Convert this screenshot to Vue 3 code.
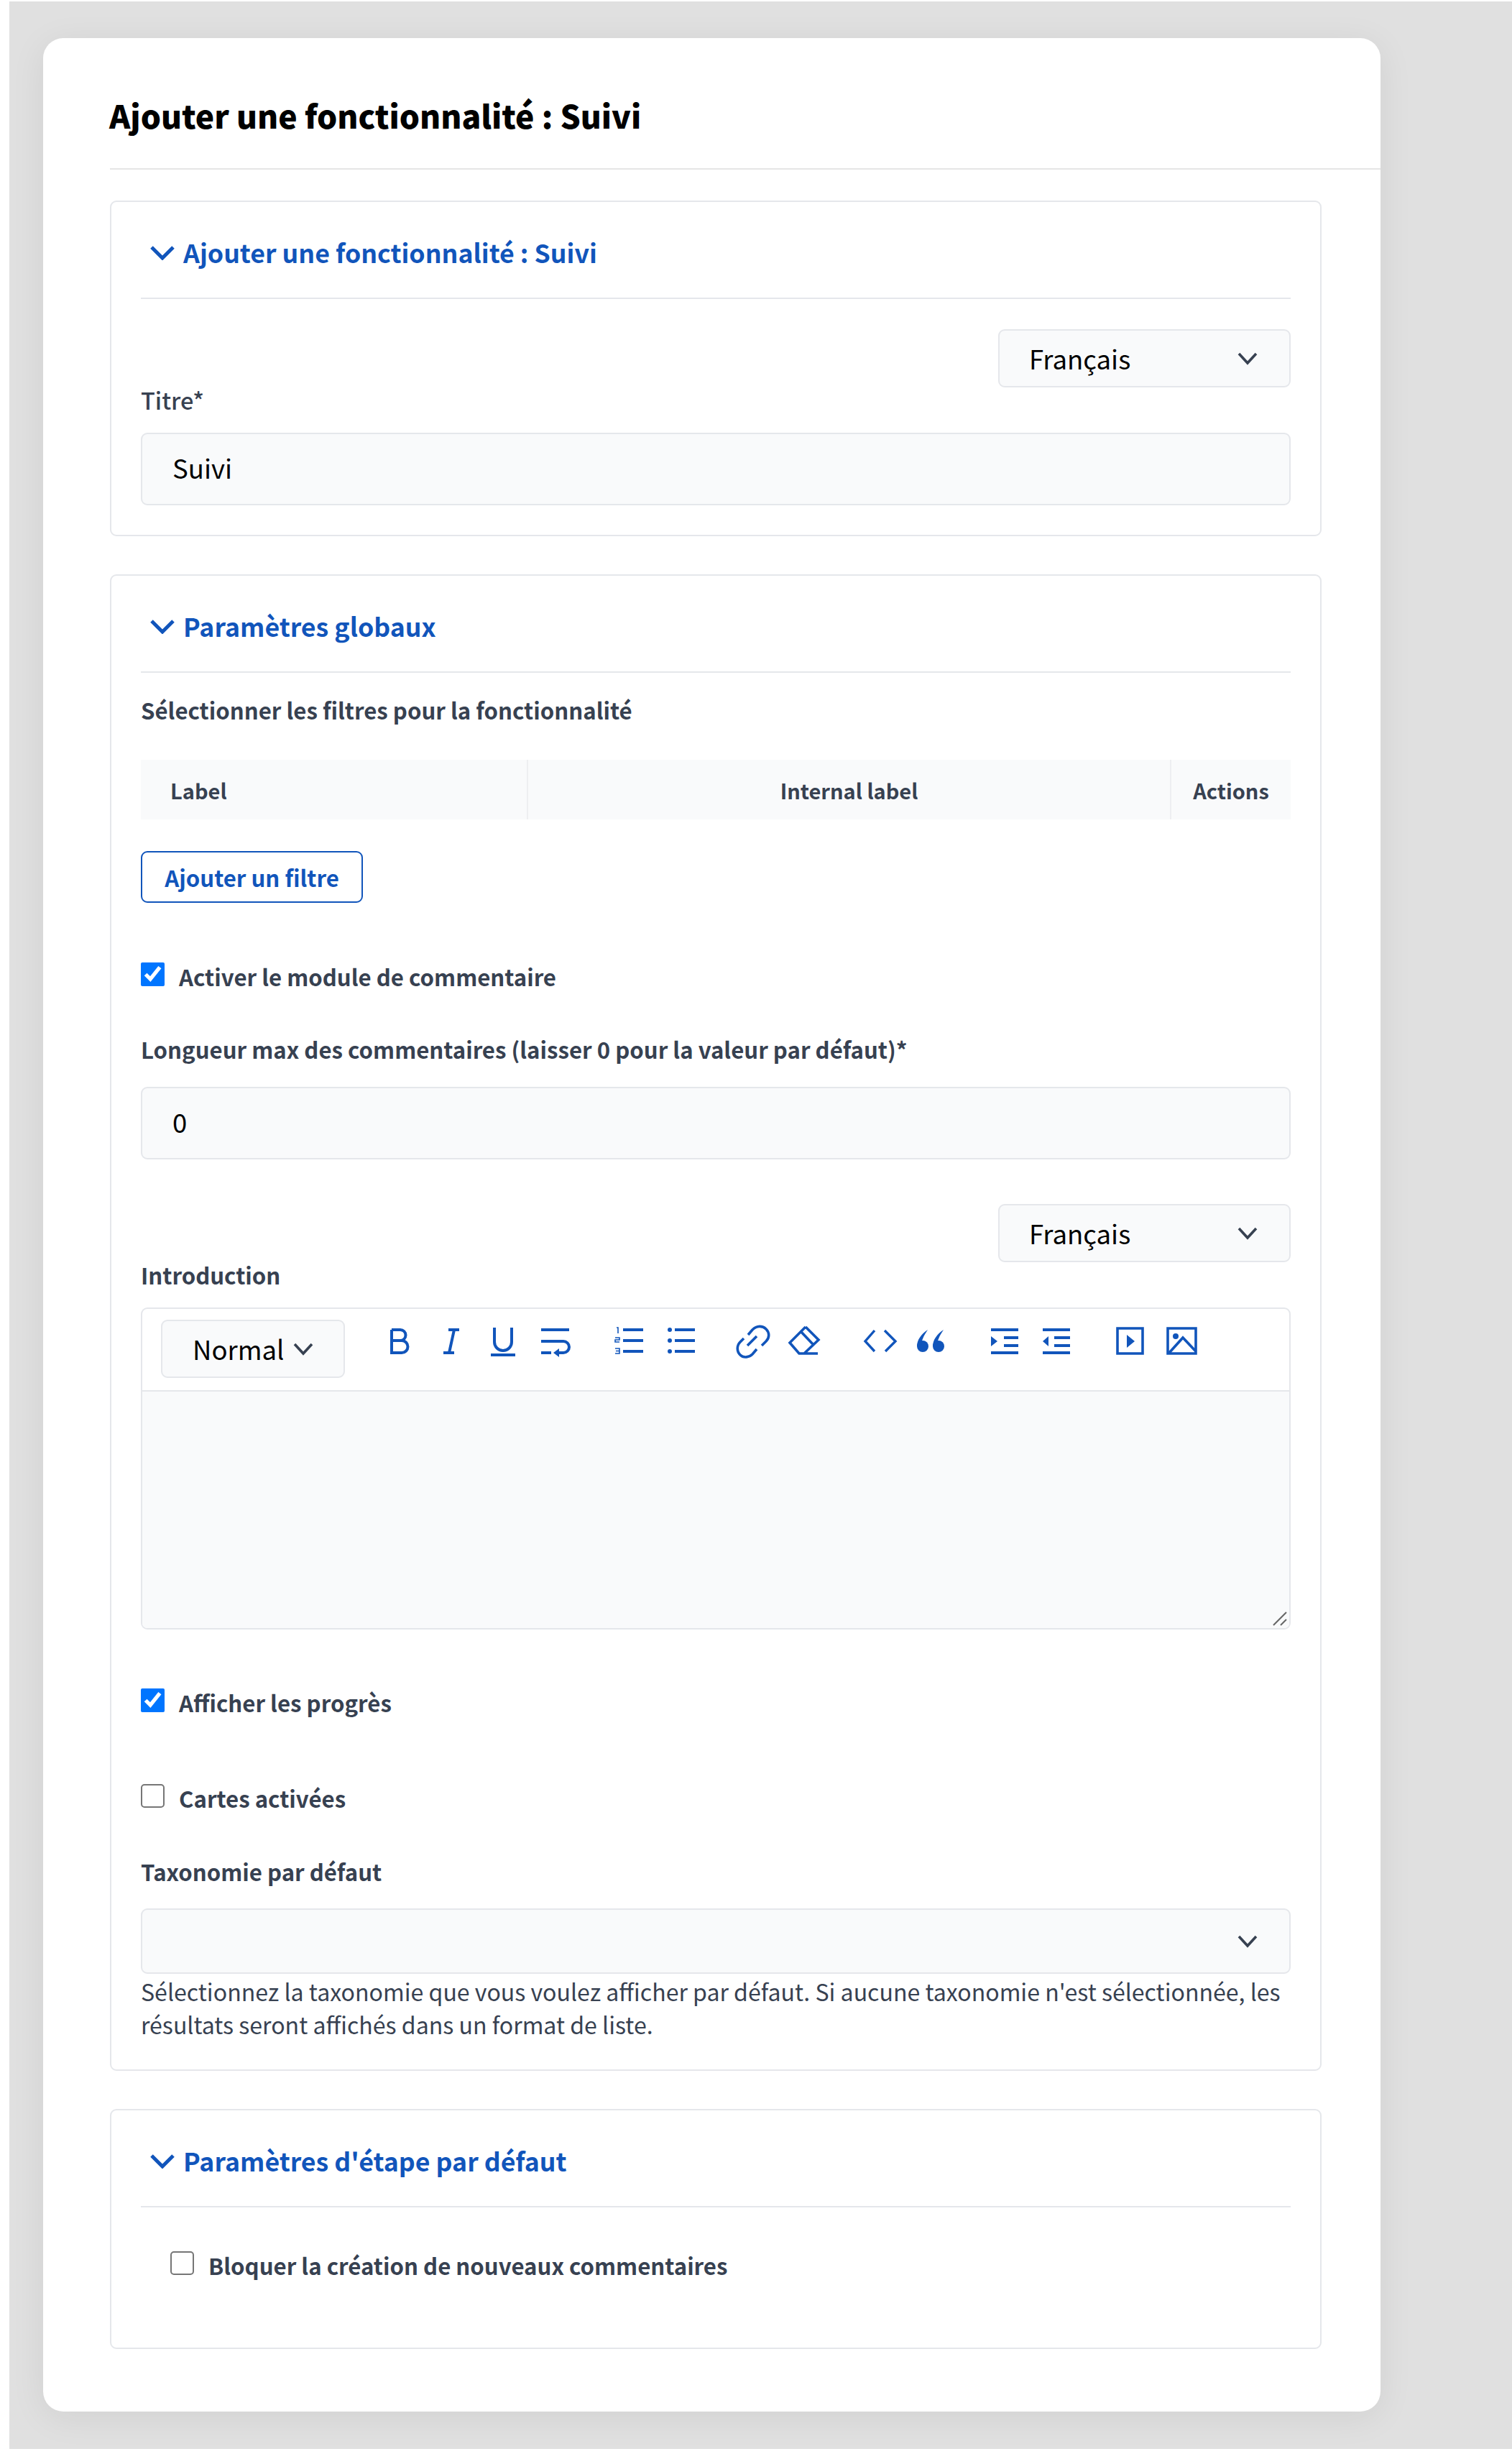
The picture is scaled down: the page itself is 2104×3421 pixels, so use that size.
<script setup>
import { ref } from 'vue'

const title = 'Ajouter une fonctionnalité : Suivi'
const showComments = ref(true)
const showProgress = ref(true)
const mapsEnabled = ref(false)
const blockComments = ref(false)

// 44x44 boxes, stroke and colour come from the svg element
const toolbarGroups = [
  [
    '<path d="M11 6v32h14a8 8 0 0 0 0-17H11M11 6h12a7.5 7.5 0 0 1 0 15"/>',
    '<path d="M18 6h15M11 38h15M26 6l-7 32"/>',
    '<path d="M10 3v20a12 12 0 0 0 24 0V3M5 41h34" />',
    '<path d="M3 6h39M3 22h31a8 8 0 0 1 0 16h-8M3 38h14"/><path d="M20 38l8-6v12z" fill="currentColor" stroke="none"/>'
  ],
  [
    '<path d="M13 6h28M13 21h28M13 36h28"/><path d="M4 3h2v8M2 17h6v3H2v3h6M2 32h6v7H2M3 35.5h5" stroke-width="1.6"/>',
    '<path d="M13 6h28M13 21h28M13 36h28"/><circle cx="6" cy="6" r="3" fill="currentColor" stroke="none"/><circle cx="6" cy="21" r="3" fill="currentColor" stroke="none"/><circle cx="6" cy="36" r="3" fill="currentColor" stroke="none"/>'
  ],
  [
    '<path d="M13 13l6-7c6-6 14-6 19-1s5 12 0 17l-6 6M7 18l-5 5c-5 5-5 13 0 18s13 3 17-1l6-7M12 28l13-13" stroke-width="3.6"/>',
    '<path d="M21 2l18 18-20 19M21 2L-1 24l13 15h26M14 8l18 19" stroke-width="3.6"/>'
  ],
  [
    '<path d="M15 7L2 22l13 14M29 7l15 15-14 14" stroke-width="3.4"/>',
    '<circle cx="10" cy="29" r="8" fill="currentColor" stroke="none"/><circle cx="32" cy="29" r="8" fill="currentColor" stroke="none"/><path d="M17 6C8 12 2 20 2 29h6c0-8 3-14 9-23zM39 6C30 12 24 20 24 29h6c0-8 3-14 9-23z" fill="currentColor" stroke="none"/>'
  ],
  [
    '<path d="M3 6h38M21 17h20M21 28h20M3 38h38"/><path d="M3 15l9 7-9 7z" fill="currentColor" stroke="none"/>',
    '<path d="M3 6h38M19 17h22M19 28h22M3 38h38"/><path d="M11 15l-8 7 8 7z" fill="currentColor" stroke="none"/>'
  ],
  [
    '<path d="M5 4h35v35H5z" stroke-width="3.6"/><path d="M18 13l11 9-11 9z" fill="currentColor" stroke="none"/>',
    '<path d="M3 4h39v35H3z" stroke-width="3.6"/><circle cx="14" cy="15" r="4" fill="currentColor" stroke="none"/><path d="M5 38l19-21 18 19" stroke-width="3.6"/>'
  ]
]
</script>

<template>
  <div class="page">
    <div class="card">
      <header class="card-head">
        <h1>{{ title }}</h1>
      </header>

      <div class="card-body">
        <section class="panel">
          <div class="panel-head">
            <svg class="panel-chevron" viewBox="0 0 34 20"><path d="M2 2l15 15L32 2" /></svg>
            <h2>{{ title }}</h2>
          </div>
          <div class="lang-row first">
            <div class="select lang">
              <span>Français</span>
              <svg class="select-chevron" viewBox="0 0 28 18"><path d="M2 2l12 13L26 2" /></svg>
            </div>
          </div>
          <label class="label titre">Titre*</label>
          <input class="field" value="Suivi" />
        </section>

        <section class="panel panel-global">
          <div class="panel-head">
            <svg class="panel-chevron" viewBox="0 0 34 20"><path d="M2 2l15 15L32 2" /></svg>
            <h2>Paramètres globaux</h2>
          </div>
          <label class="label filters">Sélectionner les filtres pour la fonctionnalité</label>
          <div class="filter-table">
            <div class="col col-label">Label</div>
            <div class="col col-internal">Internal label</div>
            <div class="col col-actions">Actions</div>
          </div>
          <button class="add-btn">Ajouter un filtre</button>

          <label class="check comments">
            <input type="checkbox" v-model="showComments" />
            <span>Activer le module de commentaire</span>
          </label>

          <label class="label max-length">Longueur max des commentaires (laisser 0 pour la valeur par défaut)*</label>
          <input class="field" value="0" />

          <div class="lang-row second">
            <div class="select lang">
              <span>Français</span>
              <svg class="select-chevron" viewBox="0 0 28 18"><path d="M2 2l12 13L26 2" /></svg>
            </div>
          </div>
          <label class="label intro">Introduction</label>

          <div class="editor">
            <div class="toolbar">
              <div class="select format">
                <span>Normal</span>
                <svg class="select-chevron" viewBox="0 0 28 18"><path d="M2 2l12 13L26 2" /></svg>
              </div>
              <div class="tool-groups">
                <div class="tool-group" v-for="(group, g) in toolbarGroups" :key="g">
                  <button class="tool" v-for="(icon, i) in group" :key="i">
                    <svg viewBox="0 0 44 44" v-html="icon"></svg>
                  </button>
                </div>
              </div>
            </div>
            <div class="editor-area">
              <svg class="grip" viewBox="0 0 20 20"><path d="M1 19L19 1M11 19l8-8" /></svg>
            </div>
          </div>

          <label class="check progress">
            <input type="checkbox" v-model="showProgress" />
            <span>Afficher les progrès</span>
          </label>
          <label class="check maps">
            <input type="checkbox" v-model="mapsEnabled" />
            <span>Cartes activées</span>
          </label>

          <label class="label taxonomy">Taxonomie par défaut</label>
          <div class="select wide">
            <span></span>
            <svg class="select-chevron" viewBox="0 0 28 18"><path d="M2 2l12 13L26 2" /></svg>
          </div>
          <p class="help">Sélectionnez la taxonomie que vous voulez afficher par défaut. Si aucune taxonomie n'est sélectionnée, les résultats seront affichés dans un format de liste.</p>
        </section>

        <section class="panel panel-step">
          <div class="panel-head">
            <svg class="panel-chevron" viewBox="0 0 34 20"><path d="M2 2l15 15L32 2" /></svg>
            <h2>Paramètres d'étape par défaut</h2>
          </div>
          <label class="check block">
            <input type="checkbox" v-model="blockComments" />
            <span>Bloquer la création de nouveaux commentaires</span>
          </label>
        </section>
      </div>
    </div>
  </div>
</template>

<style scoped>
.page {
  margin: 2px 0 0 13px;
  padding: 51px 183px 52px 47px;
  background: #e0e0e0;
  font-family: "Noto Sans CJK SC", "Noto Sans", sans-serif;
  color: #374151;
}

.card {
  background: #fff;
  border-radius: 28px;
  box-shadow: 0 8px 50px rgba(0, 0, 0, 0.07);
}

.card-head {
  margin-left: 93px;
  height: 183px;
  padding-top: 32px;
  box-sizing: border-box;
  display: flex;
  align-items: center;
  border-bottom: 2px solid #e5e5e5;
}

h1 {
  margin: 0 0 0 -1px;
  font-size: 44.4px;
  line-height: 60px;
  font-weight: 900;
  color: #000;
}

.card-body {
  padding: 43px 82px 87px 93px;
}

.panel {
  border: 2px solid #e5e7eb;
  border-radius: 9px;
  padding: 0 41px 41px;
  margin-bottom: 53px;
}

.panel-global {
  padding-bottom: 40px;
}

.panel-step {
  margin-bottom: 0;
  padding-bottom: 91px;
}

.panel-head {
  height: 135px;
  box-sizing: border-box;
  padding: 6px 0 0 13px;
  display: flex;
  align-items: center;
  gap: 12px;
  border-bottom: 2px solid #e5e7eb;
}

.panel-chevron {
  width: 34px;
  height: 20px;
  margin-top: 3px;
  fill: none;
  stroke: #1155bb;
  stroke-width: 5;
}

h2 {
  margin: 0;
  font-size: 35.7px;
  line-height: 50px;
  font-weight: 700;
  color: #1155bb;
}

.lang-row {
  display: flex;
  justify-content: flex-end;
}

.lang-row.first {
  margin-top: 42px;
}

.lang-row.second {
  margin-top: 62px;
}

.select {
  display: flex;
  align-items: center;
  justify-content: space-between;
  box-sizing: border-box;
  border: 2px solid #e5e7eb;
  border-radius: 9px;
  background: #f9fafb;
  font-size: 36.5px;
  color: #000;
}

.lang {
  width: 407px;
  height: 81px;
  padding: 0 44px 0 41px;
}

.wide {
  height: 91px;
  padding: 0 44px;
}

.format {
  width: 256px;
  height: 81px;
  padding: 0 42px 0 42px;
}

.select-chevron {
  width: 28px;
  height: 18px;
  flex: none;
  fill: none;
  stroke: #374151;
  stroke-width: 3.6;
}

.label {
  display: block;
  font-size: 31.2px;
  line-height: 40px;
  font-weight: 700;
}

.titre {
  margin-top: -3px;
  margin-bottom: 26px;
  font-size: 32.5px;
  font-weight: 500;
}

.filters {
  margin-top: 32px;
}

.max-length {
  margin-top: 58px;
  margin-bottom: 32px;
}

.intro {
  margin-top: -2px;
  margin-bottom: 25px;
}

.taxonomy {
  margin-top: 59px;
  margin-bottom: 31px;
}

.field {
  display: block;
  width: 100%;
  height: 101px;
  box-sizing: border-box;
  padding: 0 42px 4px;
  border: 2px solid #e5e7eb;
  border-radius: 9px;
  background: #f9fafb;
  font-family: inherit;
  font-size: 36.5px;
  color: #000;
  outline: none;
}

.filter-table {
  display: flex;
  height: 83px;
  margin-top: 49px;
  background: #f9fafb;
  font-size: 29px;
  font-weight: 700;
}

.col {
  display: flex;
  align-items: center;
}

.col-label {
  width: 539px;
  padding-left: 41px;
  box-sizing: border-box;
  border-right: 2px solid #eeeff1;
}

.col-internal {
  flex: 1;
  justify-content: center;
  border-right: 2px solid #eeeff1;
}

.col-actions {
  width: 166px;
  justify-content: center;
}

.add-btn {
  display: block;
  width: 309px;
  height: 72px;
  margin-top: 44px;
  padding: 0;
  border: 2px solid #1155bb;
  border-radius: 9px;
  background: #fff;
  font-family: inherit;
  font-size: 31.2px;
  font-weight: 700;
  color: #1155bb;
}

.check {
  display: flex;
  align-items: center;
  gap: 20px;
  height: 48px;
  font-size: 31.2px;
  font-weight: 700;
}

.check input {
  width: 33px;
  height: 33px;
  margin: 0 0 6px;
  flex: none;
}

.check input:not(:checked) {
  appearance: none;
  box-sizing: border-box;
  border: 2px solid #767676;
  border-radius: 5px;
  background: #fff;
}

.comments {
  margin-top: 78px;
}

.progress {
  margin-top: 77px;
}

.maps {
  margin-top: 85px;
}

.block {
  margin: 56px 0 0 41px;
}

.editor {
  border: 2px solid #e5e7eb;
  border-radius: 9px;
  overflow: hidden;
}

.toolbar {
  display: flex;
  height: 115px;
  padding: 15px 0 0 26px;
  box-sizing: border-box;
  border-bottom: 2px solid #e5e7eb;
}

.tool-groups {
  display: flex;
  gap: 30px;
  margin-left: 40px;
}

.tool-group {
  display: flex;
}

.tool-group:first-child {
  margin-right: 2px;
}

.tool {
  width: 72px;
  height: 44px;
  margin-top: 8px;
  padding: 0;
  border: none;
  background: none;
  display: flex;
  justify-content: center;
  color: #1155bb;
}

.tool svg {
  width: 44px;
  height: 44px;
  overflow: visible;
  fill: none;
  stroke: currentColor;
  stroke-width: 4;
}

.editor-area {
  position: relative;
  height: 329px;
  background: #f9fafb;
}

.grip {
  position: absolute;
  right: 3px;
  bottom: 3px;
  width: 20px;
  height: 20px;
  fill: none;
  stroke: #666;
  stroke-width: 2;
}

.help {
  margin: 1px 0 0;
  font-size: 32.1px;
  line-height: 46px;
  font-weight: 400;
}
</style>

<style>
html,
body {
  background: #fff;
}
</style>
